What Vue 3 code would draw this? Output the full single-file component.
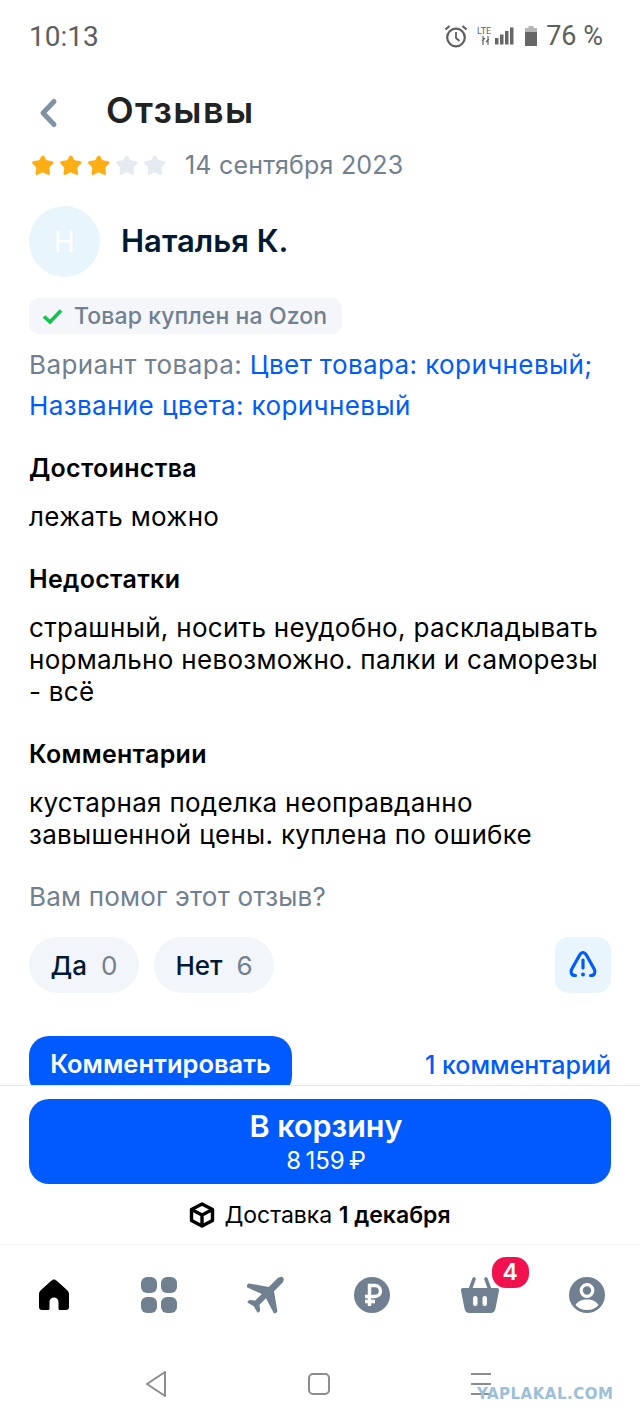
<script setup>
const stars = [1, 1, 1, 0, 0]
const sections = [
  { title: 'Достоинства', lines: ['лежать можно'] },
  { title: 'Недостатки', lines: ['страшный, носить неудобно, раскладывать', 'нормально невозможно. палки и саморезы', '- всё'] },
  { title: 'Комментарии', lines: ['кустарная поделка неоправданно', 'завышенной цены. куплена по ошибке'] },
]
</script>

<template>
  <div class="phone">
    <div class="status">
      <span class="clock">10:13</span>
      <div class="status-right">
        <svg width="24" height="24" viewBox="0 0 24 24" fill="none" stroke="#5f5f5f" stroke-width="2.2">
          <circle cx="12" cy="13.5" r="8.8" />
          <path d="M12 8v6l3.5 3" stroke-width="1.8" />
          <path d="M1.5 5.5 5.500 2M22.5 5.5 18.500 2" stroke-width="2.2" />
        </svg>
        <svg class="signal" width="40" height="22" viewBox="0 0 40 22">
          <text x="1" y="9" class="lte">LTE</text>
          <path d="M7 11v9M12 11v9M9 13l-3 3M10 17l3-3" stroke="#666" stroke-width="1.2" fill="none" />
          <rect x="19" y="13" width="3.500" height="6.500" fill="#666" />
          <rect x="24" y="9.500" width="3.500" height="10" fill="#666" />
          <rect x="29" y="6" width="3.500" height="13.500" fill="#666" />
          <rect x="34" y="2.500" width="3.500" height="17" fill="#666" />
        </svg>
        <svg width="14" height="22" viewBox="0 0 14 22">
          <path d="M4.500 1h5v2h-5z" fill="#b5b5b5" />
          <rect x="1" y="3" width="12" height="4" fill="#b5b5b5" />
          <rect x="1" y="7" width="12" height="14" fill="#666" />
        </svg>
        <span class="battery">76 %</span>
      </div>
    </div>

    <main class="content">
      <header class="head">
        <svg class="back" width="22" height="34" viewBox="0 0 22 34" fill="none">
          <path d="M17 5.500 6 17l11 11.500" stroke="#7f93a5" stroke-width="5" stroke-linecap="round" stroke-linejoin="round" />
        </svg>
        <h1>Отзывы</h1>
      </header>

      <div class="rating">
        <div class="stars">
          <svg v-for="(s, i) in stars" :key="i" width="24" height="22" viewBox="0 0 24 22">
            <path d="M12 1.500c1 0 1.600 1 2.600 3.200.5 1 1 1.500 2.200 1.700 3 .4 5.200.6 5.700 1.700.4 1-1 2.500-3.200 4.500-.9.800-1.100 1.400-.9 2.600.6 3 1 4.800.1 5.500-.9.600-2.600-.3-5.200-1.700-1-.6-2-.6-3 0-2.600 1.400-4.300 2.300-5.200 1.700-.9-.7-.5-2.500.1-5.500.2-1.200 0-1.800-.9-2.600C2.100 10.600.7 9.100 1.100 8.100c.5-1.100 2.700-1.300 5.700-1.700 1.200-.2 1.700-.7 2.200-1.700C10 2.500 11 1.500 12 1.500z" :fill="s ? '#fdae14' : '#e6ebf2'" />
          </svg>
        </div>
        <span class="date">14 сентября 2023</span>
      </div>

      <div class="author">
        <div class="avatar">Н</div>
        <span class="name">Наталья К.</span>
      </div>

      <div class="badge">
        <svg width="24" height="18" viewBox="0 0 24 18" fill="none">
          <path d="M3 9.500 9 15 20 3.500" stroke="#10c44c" stroke-width="3.600" />
        </svg>
        <span>Товар куплен на Ozon</span>
      </div>

      <p class="variant">
        <span class="grey">Вариант товара: </span><span class="link">Цвет товара: коричневый;</span><br />
        <span class="link">Название цвета: коричневый</span>
      </p>

      <section v-for="s in sections" :key="s.title" class="block">
        <h2>{{ s.title }}</h2>
        <p v-for="l in s.lines" :key="l">{{ l }}</p>
      </section>

      <div class="helpful">Вам помог этот отзыв?</div>

      <div class="votes">
        <div class="vote">Да <span>0</span></div>
        <div class="vote">Нет <span>6</span></div>
        <div class="report">
          <svg width="32" height="32" viewBox="0 0 32 32" fill="none" stroke="#005bff" stroke-width="3.200" stroke-linejoin="round">
            <path d="M16 3.500c1.500 0 2.500 1 3.500 2.800l7.800 14c1.500 2.800.3 6.200-3.300 6.200h-.5M16 3.500c-1.500 0-2.500 1-3.500 2.800l-7.800 14C3.200 23.100 4.400 26.500 8 26.500h.5" stroke-linecap="round" />
            <path d="M16 11v8" stroke-linecap="round" />
            <circle cx="16" cy="25.500" r="2" fill="#005bff" stroke="none" />
          </svg>
        </div>
      </div>

      <div class="comment-row">
        <div class="comment-btn">Комментировать</div>
        <span class="comment-link">1 комментарий</span>
      </div>
    </main>

    <div class="buy">
      <div class="cart-btn">
        <span class="cart-label">В корзину</span>
        <span class="cart-price">8&thinsp;159&thinsp;₽</span>
      </div>
      <div class="delivery">
        <svg width="26" height="26" viewBox="0 0 26 26" fill="none" stroke="#000" stroke-width="3.400" stroke-linejoin="round">
          <path d="M13 2 23.500 7.500v11L13 24 2.500 18.500v-11z" />
          <path d="M2.500 7.500 13 13l10.500-5.500M13 13v11" />
        </svg>
        <span>Доставка <b>1 декабря</b></span>
      </div>
    </div>

    <nav class="tabs">
      <svg width="36" height="36" viewBox="0 0 36 36">
        <path fill-rule="evenodd" d="M18 2.500c1 0 2 .6 3 1.500l10 9c1.300 1.200 2 2.500 2 4.500V30c0 2-1 3-3 3h-6c-1 0-1.500-.7-1.500-1.500V25a4.500 4.500 0 0 0-9 0v6.500c0 .8-.5 1.500-1.500 1.500H6c-2 0-3-1-3-3V17.500c0-2 .7-3.300 2-4.500L15 4c1-.9 2-1.500 3-1.500z" fill="#000" />
      </svg>
      <svg width="38" height="38" viewBox="0 0 38 38" fill="#708090">
        <rect x="1" y="1" width="16" height="16" rx="6" />
        <rect x="21" y="1" width="16" height="16" rx="6" />
        <rect x="1" y="21" width="16" height="16" rx="6" />
        <rect x="21" y="21" width="16" height="16" rx="6" />
      </svg>
      <svg width="38" height="38" viewBox="0 0 38 38" fill="#708090">
        <path d="M36 1.500c1.500 1.500.8 4-1.500 6.300L27 15.300l3.300 19.500c.1.800-.2 1.300-.8 1.700l-1.200.7c-.8.400-1.500.2-1.900-.6L19 22.300l-6.500 6.500.6 5.200c0 .6-.1 1-.5 1.400l-.8.800c-.6.600-1.300.5-1.700-.2l-3.300-5.700-5.700-3.300c-.7-.4-.8-1.100-.2-1.700l.8-.8c.4-.4.8-.5 1.400-.5l5.200.6 6.500-6.500L.5 11.400c-.8-.4-1-1.100-.6-1.900l.7-1.200c.4-.6.900-.9 1.700-.8L21.800 11l7.500-7.500C31.600 1.200 34.500 0 36 1.500z" />
      </svg>
      <svg width="38" height="38" viewBox="0 0 38 38">
        <circle cx="19" cy="19" r="18" fill="#708090" />
        <path d="M16.500 30V9.500h5.500a5.500 5.500 0 0 1 0 11H12M12 25.500h10" fill="none" stroke="#fff" stroke-width="3.400" />
      </svg>
      <div class="cart-tab">
        <svg width="40" height="38" viewBox="0 0 40 38">
          <path d="M10 14 14 3M30 14 26 3" stroke="#708090" stroke-width="3.600" stroke-linecap="round" fill="none" />
          <path fill-rule="evenodd" d="M3 12h34c1.500 0 2.300 1 2 2.500l-3.500 18c-.4 2.600-2 4.500-5 4.500h-21c-3 0-4.600-1.900-5-4.500L1 14.500C.7 13 1.500 12 3 12z" fill="#708090" />
          <rect x="13" y="20" width="4.500" height="10" rx="2.200" fill="#fff" />
          <rect x="22.500" y="20" width="4.500" height="10" rx="2.200" fill="#fff" />
        </svg>
        <span class="count">4</span>
      </div>
      <svg width="38" height="38" viewBox="0 0 38 38">
        <circle cx="19" cy="19" r="18" fill="#708090" />
        <circle cx="19" cy="14.500" r="5.800" fill="none" stroke="#fff" stroke-width="3.200" />
        <path d="M7.500 29c2-3.500 6-5.500 11.500-5.500S28.500 25.500 30.500 29c-2.500 3-6.500 5-11.500 5s-9-2-11.500-5z" fill="#fff" />
      </svg>
    </nav>

    <div class="sysnav">
      <svg width="24" height="30" viewBox="0 0 24 30" fill="none" stroke="#8c8c8c" stroke-width="2" stroke-linejoin="round">
        <path d="M21 3 3 15l18 12z" />
      </svg>
      <svg width="24" height="24" viewBox="0 0 24 24" fill="none" stroke="#8c8c8c" stroke-width="2">
        <rect x="2" y="2" width="20" height="20" rx="4" />
      </svg>
      <div class="menu-wrap">
        <svg width="24" height="26" viewBox="0 0 24 26" stroke="#8c8c8c" stroke-width="2">
          <path d="M2 3h20M2 13h20M2 23h20" />
        </svg>
        <span class="mark">YAPLAKAL.COM</span>
      </div>
    </div>
  </div>
</template>

<style scoped>
.phone {
  width: 640px;
  height: 1423px;
  display: flex;
  flex-direction: column;
  overflow: hidden;
  background: #fff;
  font-family: Inter, sans-serif;
  color: #001a34;
}
.status {
  height: 72px;
  flex: none;
  display: flex;
  align-items: center;
  justify-content: space-between;
  padding: 0 37px 0 29px;
  color: #5f5f5f;
  font-family: Roboto, sans-serif;
  font-size: 28px;
}
.status-right {
  display: flex;
  align-items: center;
  gap: 8px;
}
.battery {
  font-size: 27px;
}
.lte {
  font-size: 9px;
  fill: #666;
}
.content {
  flex: 1;
  min-height: 0;
  overflow: hidden;
  padding: 0 29px;
}
.head {
  display: flex;
  align-items: center;
  height: 76px;
  padding-left: 8px;
  gap: 47px;
}
.back {
  margin-top: 6px;
}
.head h1 {
  margin: 0;
  font-size: 36px;
  font-weight: 600;
  letter-spacing: 1.4px;
  color: #222;
}
.rating {
  display: flex;
  align-items: center;
  height: 40px;
  margin-top: -3px;
  gap: 18px;
}
.stars {
  display: flex;
  gap: 4px;
  margin-left: 2px;
}
.date {
  font-size: 25px;
  letter-spacing: 0.2px;
  color: #708090;
}
.author {
  display: flex;
  align-items: center;
  gap: 21px;
  margin-top: 21px;
}
.avatar {
  width: 71px;
  height: 71px;
  border-radius: 50%;
  background: #e9f5fd;
  color: #fff;
  font-size: 28px;
  display: flex;
  align-items: center;
  justify-content: center;
}
.name {
  font-size: 31px;
  font-weight: 600;
  margin-top: -3px;
}
.badge {
  display: inline-flex;
  align-items: center;
  gap: 9px;
  height: 36px;
  margin-top: 21px;
  padding: 0 15px 0 12px;
  border-radius: 10px;
  background: #f4f6f9;
  color: #708090;
  font-size: 23px;
  font-weight: 500;
  letter-spacing: 0.1px;
}
.variant {
  margin: 10px 0 26px;
  font-size: 26px;
  letter-spacing: 0.4px;
  line-height: 41px;
}
.grey {
  color: #708090;
}
.link {
  color: #005bff;
}
.block {
  margin-bottom: 30px;
  color: #000;
  font-size: 26px;
  letter-spacing: 0.3px;
  line-height: 32px;
}
.block h2 {
  margin: 0 0 17px;
  font-size: 25px;
  font-weight: 600;
}
.block p {
  margin: 0;
}
.helpful {
  font-size: 26px;
  letter-spacing: 0.2px;
  line-height: 32px;
  color: #708090;
}
.votes {
  display: flex;
  gap: 15px;
  margin-top: 24px;
}
.vote {
  height: 56px;
  padding: 0 21.500px;
  border-radius: 28px;
  background: #f2f5f9;
  font-size: 26px;
  font-weight: 500;
  display: flex;
  align-items: center;
  gap: 14px;
}
.vote span {
  color: #708090;
  font-weight: 400;
}
.report {
  margin-left: auto;
  width: 56px;
  height: 56px;
  border-radius: 14px;
  background: #e9f5fd;
  display: flex;
  align-items: center;
  justify-content: center;
}
.comment-row {
  display: flex;
  align-items: flex-start;
  justify-content: space-between;
  margin-top: 43px;
}
.comment-btn {
  width: 263px;
  height: 60px;
  border-radius: 20px;
  background: #005bff;
  color: #fff;
  font-size: 25.500px;
  font-weight: 600;
  text-align: center;
  line-height: 56px;
}
.comment-link {
  color: #005bff;
  font-size: 25px;
  font-weight: 500;
  line-height: 58px;
}
.buy {
  flex: none;
  height: 160px;
  box-sizing: border-box;
  border-top: 1px solid #e4e8ee;
  border-bottom: 1px solid #f2f2f2;
  padding: 13px 29px 0;
}
.cart-btn {
  height: 85px;
  box-sizing: border-box;
  padding-left: 12px;
  border-radius: 20px;
  background: #005bff;
  color: #fff;
  display: flex;
  flex-direction: column;
  align-items: center;
  justify-content: center;
}
.cart-label {
  font-size: 30.500px;
  font-weight: 600;
  line-height: 38px;
}
.cart-price {
  font-size: 24px;
  line-height: 32px;
}
.delivery {
  display: flex;
  align-items: center;
  justify-content: center;
  gap: 9px;
  margin-top: 17px;
  color: #000;
  font-size: 23px;
}
.delivery b {
  font-weight: 600;
}
.tabs {
  flex: none;
  height: 100px;
  display: flex;
  align-items: center;
  justify-content: space-between;
  padding: 0 34px 0 36px;
}
.cart-tab {
  position: relative;
  display: flex;
}
.count {
  position: absolute;
  top: -19px;
  right: -29px;
  width: 37px;
  height: 31px;
  border-radius: 14px;
  background: #f1114f;
  color: #fff;
  font-size: 23px;
  font-weight: 600;
  text-align: center;
  line-height: 30px;
}
.sysnav {
  flex: none;
  height: 78px;
  display: flex;
  align-items: center;
  justify-content: space-between;
  padding: 0 147px 0 144px;
}
.menu-wrap {
  position: relative;
  display: flex;
}
.mark {
  position: absolute;
  left: 8px;
  top: 14px;
  color: #9cc0d8;
  font-family: "DejaVu Sans", sans-serif;
  font-size: 15px;
  font-weight: 700;
  letter-spacing: 0.5px;
  white-space: nowrap;
}
</style>
